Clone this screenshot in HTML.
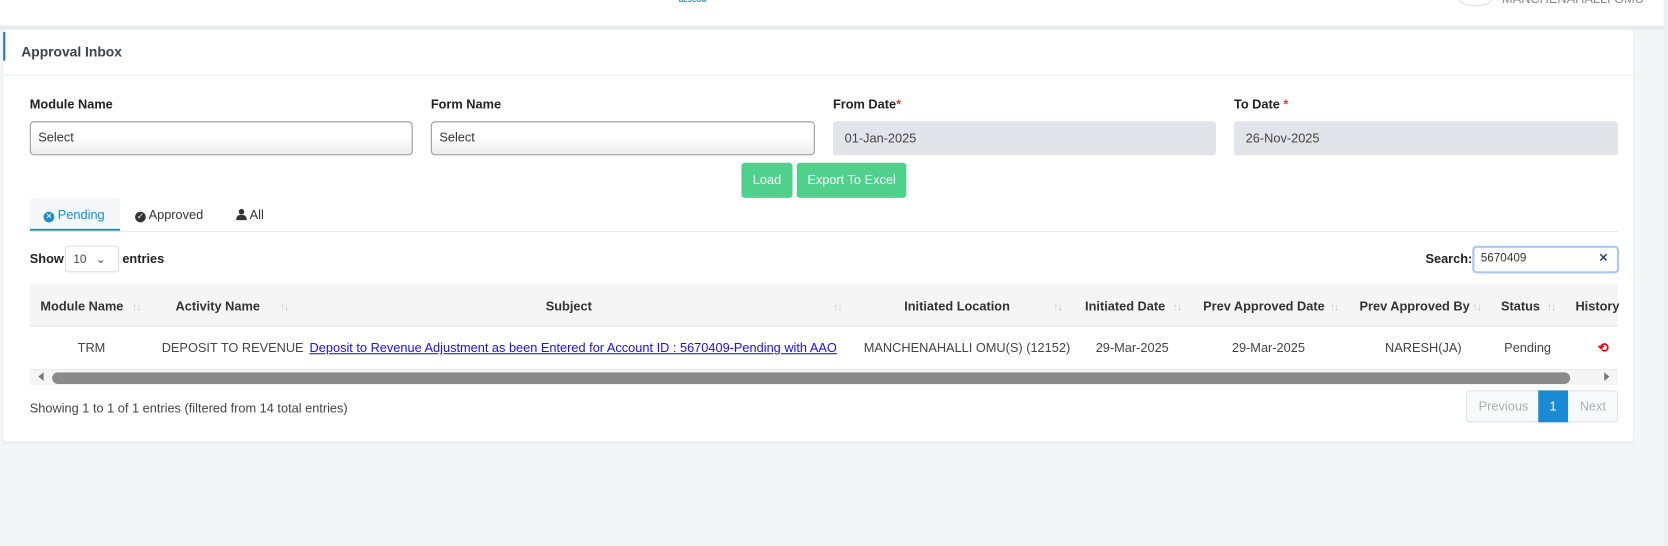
<!DOCTYPE html>
<html><head><meta charset="utf-8"><style>
*{box-sizing:border-box;margin:0;padding:0}
body{width:1668px;height:546px;background:#f4f5f7;font-family:"Liberation Sans",sans-serif;font-size:12px;color:#333;position:relative;overflow:hidden}
#w{position:absolute;left:0;top:0;width:1568px;height:513px;transform:scale(1.06378);transform-origin:0 0}
.a{position:absolute;white-space:nowrap}
.b{font-weight:bold;color:#222}
.th{position:absolute;top:281px;font-weight:bold;color:#333;font-size:12px}
.s{position:absolute;top:284px;color:#c4c4c4;font-size:10px;letter-spacing:-1px}
.td{position:absolute;top:320px;color:#444;font-size:12px}
</style></head><body><div id="w">
<div class="a" style="left:0;top:0;width:1564px;height:24px;background:#fff"></div>
<div class="a" style="left:0;top:24px;width:1564px;height:4px;background:#e9eaee"></div>
<div class="a" style="left:1564px;top:0;width:4px;height:513px;background:#eceef1"></div>
<div class="a" style="left:638px;top:-2px;font-size:6px;font-weight:bold;color:#1a8ad4">BESCOM</div>
<div class="a" style="left:1370px;top:-12px;width:34px;height:18px;border:1px solid #ddd;border-radius:50%"></div>
<div class="a" style="left:1412px;top:-8px;font-size:12px;color:#888">MANCHENAHALLI OMU</div>
<div class="a" style="left:3px;top:28px;width:1532px;height:387px;background:#fff;border-radius:3px;box-shadow:0 1px 2px rgba(0,0,0,.06)"></div>
<div class="a" style="left:3px;top:30px;width:2px;height:27px;background:#1a7bc0"></div>
<div class="a" style="left:3px;top:70px;width:1532px;height:1px;background:#ebedf0"></div>
<div class="a" style="left:20px;top:41px;font-size:13px;color:#3b4350;font-weight:bold">Approval Inbox</div>
<div class="a b" style="left:28px;top:91px">Module Name</div>
<div class="a b" style="left:405px;top:91px">Form Name</div>
<div class="a b" style="left:783px;top:91px">From Date<span style="color:#e33">*</span></div>
<div class="a b" style="left:1160px;top:91px">To Date <span style="color:#e33">*</span></div>
<div class="a" style="left:28px;top:114px;width:360px;height:32px;border:1px solid #999;border-radius:4px;background:linear-gradient(#fff 45%,#ececec);padding:7px 7px;color:#333">Select</div>
<div class="a" style="left:405px;top:114px;width:361px;height:32px;border:1px solid #999;border-radius:4px;background:linear-gradient(#fff 45%,#ececec);padding:7px 7px;color:#333">Select</div>
<div class="a" style="left:783px;top:114px;width:360px;height:32px;background:#e1e4e8;border-radius:3px;padding:9px 11px;color:#444">01-Jan-2025</div>
<div class="a" style="left:1160px;top:114px;width:361px;height:32px;background:#e1e4e8;border-radius:3px;padding:9px 11px;color:#444">26-Nov-2025</div>
<div class="a" style="left:697px;top:153px;width:48px;height:33px;background:#4fd18b;border-radius:3px;color:#fff;text-align:center;line-height:33px">Load</div>
<div class="a" style="left:749px;top:153px;width:103px;height:33px;background:#4fd18b;border-radius:3px;color:#fff;text-align:center;line-height:33px">Export To Excel</div>
<div class="a" style="left:28px;top:186px;width:85px;height:31px;background:#f6f7f9;border-bottom:2px solid #1a8ad4;border-radius:3px 3px 0 0"></div>
<div class="a" style="left:28px;top:217px;width:1493px;height:1px;background:#e6e8eb"></div>
<div class="a" style="left:41px;top:195px;color:#1a8ad4"><span style="display:inline-block;width:10px;height:10px;border-radius:50%;background:#1a8ad4;color:#fff;font-size:8px;line-height:10px;text-align:center">✕</span> Pending</div>
<div class="a" style="left:127px;top:195px;color:#333"><span style="display:inline-block;width:10px;height:10px;border-radius:50%;background:#333;color:#fff;font-size:8px;line-height:10px;text-align:center">✓</span> Approved</div>
<div class="a" style="left:222px;top:195px;color:#333"><svg width="10" height="11" viewBox="0 0 10 11" style="vertical-align:-1px"><circle cx="5" cy="3" r="2.6" fill="#333"/><path d="M0 11C0 7 2 6 5 6S10 7 10 11Z" fill="#333"/></svg> All</div>
<div class="a b" style="left:28px;top:236px">Show</div>
<div class="a" style="left:61px;top:231px;width:51px;height:25px;border:1px solid #ddd;border-radius:3px;padding:5px 7px;font-size:11px;color:#444">10 <span style="margin-left:6px">⌄</span></div>
<div class="a b" style="left:115px;top:236px">entries</div>
<div class="a b" style="left:1340px;top:236px">Search:</div>
<div class="a" style="left:1384px;top:231px;width:138px;height:26px;border:2px solid #a8c9f5;border-radius:4px;padding:4px 6px;font-size:11px;color:#333">5670409<span style="position:absolute;right:8px;top:3px;color:#2a4f80;font-weight:bold">✕</span></div>
<div class="a" style="left:28px;top:267px;width:1493px;height:40px;background:#f5f5f5;border-bottom:1px solid #e5e5e5"></div>
<div class="th" style="left:38px">Module Name</div><div class="s" style="left:124px">↑↓</div>
<div class="th" style="left:165px">Activity Name</div><div class="s" style="left:263px">↑↓</div>
<div class="th" style="left:513px">Subject</div><div class="s" style="left:783px">↑↓</div>
<div class="th" style="left:850px">Initiated Location</div><div class="s" style="left:990px">↑↓</div>
<div class="th" style="left:1020px">Initiated Date</div><div class="s" style="left:1102px">↑↓</div>
<div class="th" style="left:1131px">Prev Approved Date</div><div class="s" style="left:1250px">↑↓</div>
<div class="th" style="left:1278px">Prev Approved By</div><div class="s" style="left:1384px">↑↓</div>
<div class="th" style="left:1411px">Status</div><div class="s" style="left:1454px">↑↓</div>
<div class="th" style="left:1481px">History</div>
<div class="td" style="left:73px">TRM</div>
<div class="td" style="left:152px">DEPOSIT TO REVENUE</div>
<div class="td" style="left:291px;color:#1a0dff;text-decoration:underline">Deposit to Revenue Adjustment as been Entered for Account ID : 5670409-Pending with AAO</div>
<div class="td" style="left:812px">MANCHENAHALLI OMU(S) (12152)</div>
<div class="td" style="left:1030px">29-Mar-2025</div>
<div class="td" style="left:1158px">29-Mar-2025</div>
<div class="td" style="left:1302px">NARESH(JA)</div>
<div class="td" style="left:1414px">Pending</div>
<div class="td" style="left:1502px;color:#e00;font-weight:bold">⟲</div>
<div class="a" style="left:28px;top:347px;width:1493px;height:1px;background:#e5e5e5"></div>
<div class="a" style="left:28px;top:348px;width:1493px;height:14px;background:#f5f5f5"></div>
<div class="a" style="left:36px;top:350px;width:0;height:0;border:4px solid transparent;border-right:5px solid #777;border-left:0"></div>
<div class="a" style="left:1508px;top:350px;width:0;height:0;border:4px solid transparent;border-left:5px solid #777;border-right:0"></div>
<div class="a" style="left:49px;top:350px;width:1427px;height:11px;background:#8a8a8a;border-radius:6px"></div>
<div class="a" style="left:28px;top:377px;color:#444">Showing 1 to 1 of 1 entries (filtered from 14 total entries)</div>
<div class="a" style="left:1378px;top:367px;width:143px;height:30px;border:1px solid #dfe3e8;border-radius:3px;background:#f8f9fa"></div>
<div class="a" style="left:1390px;top:375px;color:#aab0b6">Previous</div>
<div class="a" style="left:1446px;top:367px;width:28px;height:30px;background:#1a8ad4;color:#fff;text-align:center;line-height:30px">1</div>
<div class="a" style="left:1485px;top:375px;color:#aab0b6">Next</div>
</div></body></html>
